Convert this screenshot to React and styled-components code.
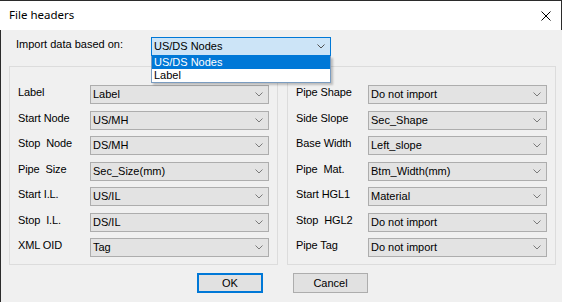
import React from "react";
import styled, { createGlobalStyle } from "styled-components";

const GlobalStyle = createGlobalStyle`
  html, body { margin: 0; padding: 0; background: #f0f0f0; }
  * { box-sizing: border-box; }
`;

const Window = styled.div`
  width: 562px;
  height: 302px;
  display: flex;
  flex-direction: column;
  background: #f0f0f0;
  font-family: "Liberation Sans", Arial, sans-serif;
  font-size: 11px;
  color: #000;
  overflow: hidden;
`;

const TitleBar = styled.div`
  height: 30px;
  flex: none;
  background: #fff;
  border-top: 1px solid #2b2b2b;
  border-right: 1px solid #2b2b2b;
  display: flex;
  align-items: center;
  justify-content: space-between;
  padding: 0 10px 0 9px;
`;

const Title = styled.span`
  font-family: "Noto Sans", "Segoe UI", sans-serif;
  font-size: 11.5px;
  line-height: 14px;
  margin-top: -1px;
`;

const CloseButton = styled.span`
  display: flex;
  width: 10px;
  height: 10px;
`;

const Body = styled.div`
  flex: 1;
  border-left: 1px solid #2b2b2b;
  display: flex;
  flex-direction: column;
  padding: 7px 0 0 8px;
`;

const TopRow = styled.div`
  display: flex;
  align-items: flex-start;
  padding-left: 7px;
  position: relative;
  z-index: 2;
`;

const TopLabel = styled.span`
  width: 135px;
  line-height: 15px;
`;

const ComboWrap = styled.div`
  position: relative;
  width: ${(p) => p.$w}px;
`;

const Combo = styled.div`
  height: 19px;
  width: 100%;
  border: 1px solid ${(p) => (p.$focused ? "#0078d7" : "#adadad")};
  background: ${(p) => (p.$focused ? "#cce4f7" : "#e3e3e3")};
  display: flex;
  align-items: center;
  justify-content: space-between;
  padding: 0 5px 0 2px;
  line-height: 17px;
  white-space: nowrap;
`;

const DropList = styled.div`
  position: absolute;
  left: 0;
  top: 100%;
  width: 100%;
  background: #fff;
  border: 1px solid #7a9cc0;
  border-top: none;
  box-shadow: 2px 2px 2px rgba(0, 0, 0, 0.22);
`;

const DropItem = styled.div`
  height: 13px;
  line-height: 13px;
  padding-left: 2px;
  background: ${(p) => (p.$selected ? "#0078d7" : "#fff")};
  color: ${(p) => (p.$selected ? "#fff" : "#000")};
`;

const Groups = styled.div`
  display: flex;
  gap: 9px;
  margin-top: 10px;
`;

const Group = styled.div`
  width: 269px;
  height: 199px;
  border: 1px solid #dcdcdc;
  padding: 18px 8px 0 8px;
  display: grid;
  grid-template-columns: 72px 179px;
  grid-auto-rows: 19px;
  row-gap: 6.5px;
  align-content: start;
`;

const FieldLabel = styled.span`
  line-height: 15px;
  white-space: pre;
  letter-spacing: -0.1px;
`;

const Buttons = styled.div`
  display: flex;
  gap: 30px;
  margin-top: 8px;
  padding-left: 188px;
`;

const Button = styled.button`
  height: 20px;
  width: ${(p) => p.$w}px;
  font-family: "Liberation Sans", Arial, sans-serif;
  font-size: 11px;
  color: #000;
  background: #e1e1e1;
  border: ${(p) => (p.$default ? "2px solid #0078d7" : "1px solid #adadad")};
  padding: 0;
  display: flex;
  align-items: center;
  justify-content: center;
`;

const Chevron = ({ color = "#7a7a7a" }) => (
  <svg width="8" height="5" viewBox="0 0 8 5">
    <path d="M0.5 0.5 L4 4 L7.5 0.5" fill="none" stroke={color} strokeWidth="1" />
  </svg>
);

const Field = ({ label, value }) => (
  <>
    <FieldLabel>{label}</FieldLabel>
    <Combo>
      <span>{value}</span>
      <Chevron />
    </Combo>
  </>
);

const left = [
  ["Label", "Label"],
  ["Start Node", "US/MH"],
  ["Stop  Node", "DS/MH"],
  ["Pipe  Size", "Sec_Size(mm)"],
  ["Start I.L.", "US/IL"],
  ["Stop  I.L.", "DS/IL"],
  ["XML OID", "Tag"],
];

const right = [
  ["Pipe Shape", "Do not import"],
  ["Side Slope", "Sec_Shape"],
  ["Base Width", "Left_slope"],
  ["Pipe  Mat.", "Btm_Width(mm)"],
  ["Start HGL1", "Material"],
  ["Stop  HGL2", "Do not import"],
  ["Pipe Tag", "Do not import"],
];

export default function App() {
  return (
    <>
      <GlobalStyle />
      <Window>
        <TitleBar>
          <Title>File headers</Title>
          <CloseButton>
            <svg width="10" height="10" viewBox="0 0 10 10">
              <path d="M0.5 0.5 L9.5 9.5 M9.5 0.5 L0.5 9.5" stroke="#000" strokeWidth="1" />
            </svg>
          </CloseButton>
        </TitleBar>
        <Body>
          <TopRow>
            <TopLabel>Import data based on:</TopLabel>
            <ComboWrap $w={180}>
              <Combo $focused>
                <span>US/DS Nodes</span>
                <Chevron color="#505050" />
              </Combo>
              <DropList>
                <DropItem $selected>US/DS Nodes</DropItem>
                <DropItem>Label</DropItem>
              </DropList>
            </ComboWrap>
          </TopRow>
          <Groups>
            <Group>
              {left.map(([l, v]) => (
                <Field key={l} label={l} value={v} />
              ))}
            </Group>
            <Group>
              {right.map(([l, v]) => (
                <Field key={l} label={l} value={v} />
              ))}
            </Group>
          </Groups>
          <Buttons>
            <Button $w={66} $default>OK</Button>
            <Button $w={75}>Cancel</Button>
          </Buttons>
        </Body>
      </Window>
    </>
  );
}
